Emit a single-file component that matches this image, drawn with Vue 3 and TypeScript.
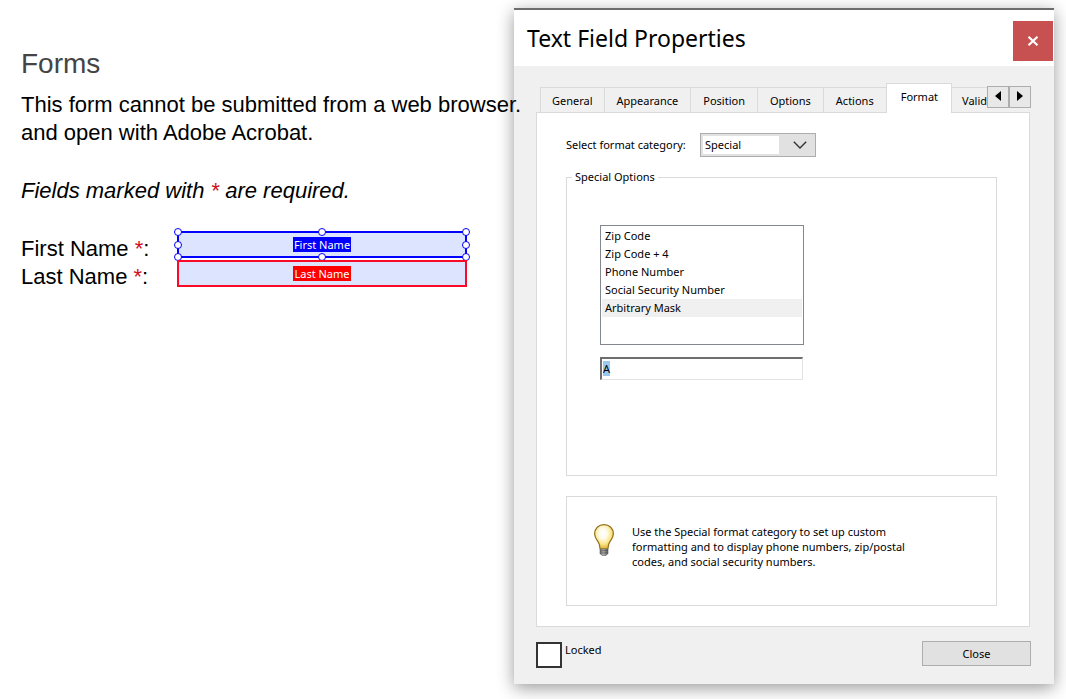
<script setup lang="ts">
import { onMounted, ref } from 'vue'

interface FormField {
  id: string
  label: string
  selected: boolean
}

const fields: FormField[] = [
  { id: 'first-name', label: 'First Name', selected: true },
  { id: 'last-name', label: 'Last Name', selected: false },
]
const handles = ['tl', 'tc', 'tr', 'ml', 'mr', 'bl', 'bc', 'br']

const tabs = ['General', 'Appearance', 'Position', 'Options', 'Actions', 'Format', 'Validate']
const activeTab = ref('Format')

const categories = ['None', 'Number', 'Percentage', 'Date', 'Time', 'Special', 'Custom']
const category = ref('Special')

const specialOptions = ['Zip Code', 'Zip Code + 4', 'Phone Number', 'Social Security Number', 'Arbitrary Mask']
const special = ref('Arbitrary Mask')

const mask = ref('A')
const locked = ref(false)
const maskInput = ref<HTMLInputElement | null>(null)

function stepTab(delta: number): void {
  const next = tabs.indexOf(activeTab.value) + delta
  if (next >= 0 && next < tabs.length) activeTab.value = tabs[next]
}

onMounted(() => {
  maskInput.value?.focus()
  maskInput.value?.select()
})
</script>

<template>
  <div class="workspace">
    <main class="document">
      <h1>Forms</h1>
      <p>This form cannot be submitted from a web browser.<br />and open with Adobe Acrobat.</p>
      <p class="note">Fields marked with <span class="req">*</span> are required.</p>
      <form class="fields">
        <div class="labels">
          <label v-for="f in fields" :key="f.id" :for="f.id">{{ f.label }} <span class="req">*</span>:</label>
        </div>
        <div class="boxes">
          <div v-for="f in fields" :key="f.id" class="box" :class="{ selected: f.selected }">
            <input :id="f.id" type="text" />
            <span class="tag">{{ f.label }}</span>
            <template v-if="f.selected">
              <i v-for="h in handles" :key="h" class="handle" :class="h"></i>
            </template>
          </div>
        </div>
      </form>
    </main>

    <section class="dialog" role="dialog" aria-labelledby="dialog-title">
      <header class="titlebar">
        <h2 id="dialog-title">Text Field Properties</h2>
        <button type="button" class="dismiss" aria-label="Close dialog">
          <svg viewBox="0 0 12 10" width="12" height="10"><path d="M1.5 0.8 L10.5 9.2 M10.5 0.8 L1.5 9.2" stroke="#fff" stroke-width="2.2" fill="none" /></svg>
        </button>
      </header>

      <div class="body">
        <div class="strip">
          <div class="tabs" role="tablist">
            <button
              v-for="t in tabs"
              :key="t"
              type="button"
              role="tab"
              class="tab"
              :class="{ active: t === activeTab }"
              :aria-selected="t === activeTab"
              @click="activeTab = t"
            >{{ t }}</button>
          </div>
          <div class="scroller">
            <button type="button" aria-label="Previous tab" @click="stepTab(-1)">
              <svg viewBox="0 0 6 10" width="6" height="10"><path d="M6 0 V10 L0 5 Z" fill="#000" /></svg>
            </button>
            <button type="button" aria-label="Next tab" @click="stepTab(1)">
              <svg viewBox="0 0 6 10" width="6" height="10"><path d="M0 0 V10 L6 5 Z" fill="#000" /></svg>
            </button>
          </div>
        </div>

        <div class="panel" role="tabpanel">
          <div class="category">
            <label for="category">Select format category:</label>
            <span class="combo">
              <select id="category" v-model="category">
                <option v-for="c in categories" :key="c">{{ c }}</option>
              </select>
              <svg viewBox="0 0 14 8" width="14" height="8"><path d="M0.8 0.8 L7 7 L13.2 0.8" stroke="#333" stroke-width="1.4" fill="none" /></svg>
            </span>
          </div>

          <fieldset>
            <legend>Special Options</legend>
            <select v-model="special" class="list" size="6" aria-label="Special format">
              <option v-for="o in specialOptions" :key="o">{{ o }}</option>
            </select>
            <input ref="maskInput" v-model="mask" class="mask" type="text" aria-label="Arbitrary mask" />
          </fieldset>

          <div class="tip">
            <svg class="bulb" viewBox="0 0 20 32" width="20" height="32" aria-hidden="true">
              <defs>
                <radialGradient id="glow" cx="0.45" cy="0.36" r="0.62">
                  <stop offset="0" stop-color="#ffffff" />
                  <stop offset="0.35" stop-color="#fffbe8" />
                  <stop offset="0.7" stop-color="#fae68c" />
                  <stop offset="1" stop-color="#dfb53a" />
                </radialGradient>
                <linearGradient id="metal" x1="0" x2="1" y1="0" y2="0">
                  <stop offset="0" stop-color="#666" />
                  <stop offset="0.4" stop-color="#b5b5b5" />
                  <stop offset="1" stop-color="#555" />
                </linearGradient>
              </defs>
              <path d="M10 0.6 C4.6 0.6 0.6 4.6 0.6 9.8 C0.6 14.2 4 16.6 5.2 20 C5.8 21.8 5.6 23.4 6.2 25 H13.8 C14.4 23.4 14.2 21.8 14.8 20 C16 16.6 19.4 14.2 19.4 9.8 C19.4 4.6 15.4 0.6 10 0.6 Z" fill="url(#glow)" stroke="#94701a" stroke-width="1.2" />
              <path d="M6 25 H14 V29.5 L12 31.5 H8 L6 29.5 Z" fill="url(#metal)" stroke="#666" stroke-width="0.6" />
              <path d="M6 27 L14 26.4 M6 29.2 L14 28.6" stroke="#555" stroke-width="0.7" />
            </svg>
            <p>Use the Special format category to set up custom formatting and to display phone numbers, zip/postal codes, and social security numbers.</p>
          </div>
        </div>

        <footer class="actions">
          <label class="lock"><input v-model="locked" type="checkbox" /><span>Locked</span></label>
          <button type="button" class="close">Close</button>
        </footer>
      </div>
    </section>
  </div>
</template>

<style>
body {
  background: #fff;
}
</style>

<style scoped>
.workspace {
  display: grid;
  grid-template-columns: minmax(0, 514fr) minmax(0, 540fr);
  align-items: start;
  padding: 8px 12px 15px 0;
  overflow: hidden;
}
.document {
  position: relative;
  z-index: 1;
  padding: 38px 0 0 21px;
  font-family: "Liberation Sans", Arial, sans-serif;
  font-size: 22px;
  line-height: 28px;
  color: #000;
  white-space: nowrap;
}
h1 {
  margin: 0 0 9px;
  font-size: 28px;
  line-height: 36px;
  font-weight: 400;
  color: #444;
}
.document p {
  margin: 0 0 30px;
}
.note {
  font-style: italic;
}
.req {
  color: #cc1122;
}
.fields {
  display: flex;
  align-items: flex-start;
}
.labels {
  display: flex;
  flex-direction: column;
  width: 156px;
}
.boxes {
  display: flex;
  flex-direction: column;
  gap: 2px;
  flex: 1;
  max-width: 290px;
  margin-top: -4px;
}
.box {
  position: relative;
  display: flex;
  justify-content: center;
  align-items: center;
  height: 27px;
  box-sizing: border-box;
  border: 2px solid #fa0a28;
  background: #dde4ff;
}
.box.selected {
  border-color: #00f;
}
.box input {
  position: absolute;
  inset: 0;
  width: 100%;
  padding: 0 4px;
  box-sizing: border-box;
  border: 0;
  background: transparent;
  outline: none;
}
.tag {
  position: relative;
  padding: 0 1px;
  background: #f00;
  color: #fff;
  font: 11px/15px "Noto Sans", "Open Sans", sans-serif;
  pointer-events: none;
}
.selected .tag {
  background: #00f;
}
.handle {
  position: absolute;
  width: 8px;
  height: 8px;
  box-sizing: border-box;
  border: 1px solid #00f;
  border-radius: 50%;
  background: #fff;
  transform: translate(-50%, -50%);
}
.tl, .tc, .tr { top: -1px; }
.ml, .mr { top: 50%; }
.bl, .bc, .br { top: calc(100% + 1px); }
.tl, .ml, .bl { left: -1px; }
.tc, .bc { left: 50%; }
.tr, .mr, .br { left: calc(100% + 1px); }

.dialog {
  position: relative;
  border-top: 2px solid #6d6d6d;
  background: #f0f0f0;
  box-shadow: 0 4px 16px rgba(0, 0, 0, 0.4);
  font: 11px/18px "Noto Sans", "Open Sans", sans-serif;
  color: #000;
}
.dialog button,
.dialog select,
.dialog input {
  font: inherit;
  color: inherit;
  margin: 0;
  border-radius: 0;
  outline: none;
}
.titlebar {
  display: flex;
  justify-content: space-between;
  align-items: center;
  height: 56px;
  padding: 0 1px 0 13px;
  background: #fff;
}
h2 {
  margin: 0;
  font-size: 23px;
  line-height: 32px;
  font-weight: 400;
}
.dialog .dismiss {
  display: grid;
  place-items: center;
  width: 40px;
  height: 40px;
  margin-top: 6px;
  padding: 0;
  border: 0;
  background: #c75050;
}
.body {
  padding: 17px 23px 16px 22px;
}
.strip {
  display: flex;
  align-items: flex-start;
  margin-left: 4px;
}
.tabs {
  display: flex;
  align-items: flex-end;
  flex: 1;
  min-width: 0;
  height: 30px;
  margin-bottom: -1px;
  overflow: hidden;
  position: relative;
}
.dialog .tab {
  flex: none;
  height: 25px;
  margin-bottom: 1px;
  padding: 2px 12px 0;
  border: 1px solid #dadada;
  border-width: 1px 0 0 1px;
  background: #f0f0f0;
}
.dialog .tab:first-child {
  padding: 2px 11px 0;
}
.dialog .tab.active {
  height: 30px;
  margin-bottom: 0;
  padding: 0 13px 4px 14px;
  border-right-width: 1px;
  background: #fff;
}
.dialog .tab.active + .tab {
  padding-left: 10px;
  border-left-width: 0;
}
.scroller {
  display: flex;
  margin-top: 3px;
}
.scroller button {
  display: grid;
  place-items: center;
  width: 22px;
  height: 22px;
  padding: 0 0 2px;
  border: 1px solid #adadad;
  background: #e8e8e8;
}
.panel {
  margin-right: 1px;
  padding: 20px 32px 20px 29px;
  border: 1px solid #dadada;
  background: #fff;
}
.category {
  display: flex;
  align-items: center;
}
.category label {
  width: 134px;
  white-space: nowrap;
}
.combo {
  display: grid;
  align-items: center;
}
.combo > * {
  grid-area: 1 / 1;
}
.combo select {
  appearance: none;
  width: 116px;
  height: 24px;
  padding: 0 36px 0 4px;
  border: 1px solid #adadad;
  background: linear-gradient(#fff, #fff) 2px 2px / 76px 18px no-repeat #e1e1e1;
}
.combo svg {
  justify-self: end;
  margin-right: 9px;
  pointer-events: none;
}
fieldset {
  display: flex;
  flex-direction: column;
  align-items: flex-start;
  gap: 12px;
  min-width: 0;
  margin: 11px 0 0;
  padding: 39px 33px 95px;
  border: 1px solid #dadada;
}
legend {
  margin-left: -28px;
  padding: 0 3px;
}
.list {
  width: 204px;
  height: 120px;
  padding: 1px;
  box-sizing: border-box;
  border: 1px solid #828790;
  background: #fff;
  overflow: hidden;
}
.list option {
  height: 18px;
  min-height: 18px;
  padding: 1px 3px 0;
  box-sizing: border-box;
  line-height: 18px;
}
.list option:checked {
  color: #000;
  background: linear-gradient(#f0f0f0, #f0f0f0);
}
.dialog .mask {
  width: 203px;
  height: 23px;
  padding: 0 1px 2px;
  box-sizing: border-box;
  border: 1px solid #e3e3e3;
  border-top: 2px solid #6e6e6e;
  border-left: 2px solid #6e6e6e;
  background: #fff;
}
.mask::selection {
  color: #000;
  background: #99c9ef;
}
.tip {
  display: flex;
  gap: 18px;
  align-items: flex-start;
  margin-top: 20px;
  padding: 27px 60px 36px 27px;
  border: 1px solid #dadada;
}
.bulb {
  flex: none;
}
.tip p {
  margin: 0;
  max-width: 300px;
  line-height: 15px;
}
.actions {
  display: flex;
  justify-content: space-between;
  align-items: flex-start;
  padding-top: 14px;
}
.lock {
  display: flex;
  align-items: flex-start;
  gap: 3px;
}
.lock input {
  appearance: none;
  width: 26px;
  height: 26px;
  box-sizing: border-box;
  border: 2px solid #333;
  background: #fff;
}
.dialog .lock input {
  margin-top: 1px;
}
.lock input:checked {
  background: #333;
  box-shadow: inset 0 0 0 4px #fff;
}
.close {
  width: 109px;
  height: 25px;
  padding: 0;
  border: 1px solid #adadad;
  background: #e1e1e1;
}
</style>
